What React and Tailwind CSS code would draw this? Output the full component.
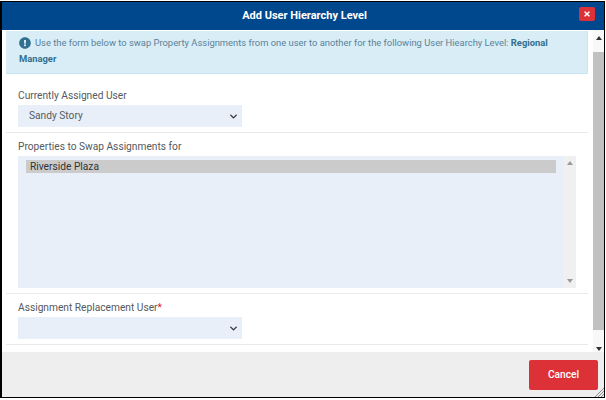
import { FaExclamationCircle, FaTimes } from "react-icons/fa";
import { FiChevronDown } from "react-icons/fi";

function SelectBox({ value }) {
  return (
    <div className="flex items-center justify-between w-[224px] h-[22px] bg-[#e8eff8] pl-[11px] pr-[3px] text-[10.2px] text-[#555b60]">
      <span>{value}</span>
      <FiChevronDown className="text-[11px] text-[#333]" strokeWidth={3} />
    </div>
  );
}

export default function App() {
  return (
    <div className="w-[606px] h-[400px] bg-white pt-[1px] pb-[2px] pr-[1px] font-['Roboto',sans-serif]">
      <div className="relative flex flex-col h-full border-l-2 border-t border-r border-b border-black">
        <div className="flex items-center justify-center relative h-[28px] shrink-0 bg-[#00488e] pl-[3px] text-white text-[11px] font-bold">
          Add User Hierarchy Level
          <div className="absolute right-[9px] top-[5px] flex items-center justify-center w-[16px] h-[14px] rounded-[2px] bg-[#dc3237] text-white">
            <FaTimes className="text-[8px]" />
          </div>
        </div>

        <div className="flex flex-1 min-h-0">
          <div className="flex-1 min-w-0 pl-[4px] pr-[5px] pt-[1px]">
            <div className="h-[43px] bg-[#d9edf7] border-b border-r border-[#c5e6f2] pl-[13px] pr-[12px] pt-[4px] text-[9.4px] leading-[16px] text-[#5a8298]">
              <FaExclamationCircle className="inline-block text-[12px] text-[#31708f] mr-[4px] align-[-2.5px]" />
              Use the form below to swap Property Assignments from one user to another for the following User Hiearchy Level: <b className="text-[#31708f]">Regional Manager</b>
            </div>

            <div className="pl-[12px] pt-[14px] h-[59px] border-b border-[#e9e9e9]">
              <div className="text-[10.2px] leading-[16px] text-[#54595e] mb-[1px]">Currently Assigned User</div>
              <SelectBox value="Sandy Story" />
            </div>

            <div className="px-[12px] pt-[6px] h-[161px] border-b border-[#e9e9e9]">
              <div className="text-[10.2px] leading-[16px] text-[#54595e] mb-[1px]">Properties to Swap Assignments for</div>
              <div className="flex h-[132px] bg-[#e8eff8]">
                <div className="flex-1 pl-[8px] pt-[4px]">
                  <div className="h-[13px] bg-[#cbcbcb] pl-[4px] text-[10.2px] leading-[14px] text-[#333]">Riverside Plaza</div>
                </div>
                <div className="flex flex-col items-center justify-between w-[13px] ml-[7px] bg-[#f0f0f0] py-[5px]">
                  <div className="w-0 h-0 border-x-[3px] border-x-transparent border-b-[4px] border-b-[#9a9a9a]" />
                  <div className="w-0 h-0 border-x-[3px] border-x-transparent border-t-[4px] border-t-[#9a9a9a]" />
                </div>
              </div>
            </div>

            <div className="pl-[12px] pt-[6px] h-[51px] border-b border-[#e9e9e9]">
              <div className="text-[10.2px] leading-[16px] text-[#54595e] mb-[1px]">
                Assignment Replacement User<span className="text-[#e0262c]">*</span>
              </div>
              <SelectBox value="" />
            </div>
          </div>

          <div className="flex flex-col w-[11px] shrink-0 bg-[#f8f8f8]">
            <div className="flex justify-center h-[22px] pt-[6px]">
              <div className="w-0 h-0 border-x-[3px] border-x-transparent border-b-[4px] border-b-[#333]" />
            </div>
            <div className="h-[278px] bg-[#c1c1c1]" />
            <div className="flex flex-1 items-end justify-center pb-[1px]">
              <div className="w-0 h-0 border-x-[3px] border-x-transparent border-t-[4px] border-t-[#333]" />
            </div>
          </div>
        </div>

        <div className="flex justify-end items-start h-[45px] shrink-0 bg-[#eeeeee] pt-[8px] pr-[6px]">
          <div className="flex items-center justify-center w-[69px] h-[30px] rounded-[2px] bg-[#dc3237] text-white text-[10.2px] font-medium">
            Cancel
          </div>
        </div>

        <svg className="absolute right-0 bottom-0" width="9" height="9" viewBox="0 0 9 9" stroke="#8a8a8a" strokeWidth="1">
          <path d="M9 0L0 9M9 3L3 9M9 6L6 9" />
        </svg>
      </div>
    </div>
  );
}
